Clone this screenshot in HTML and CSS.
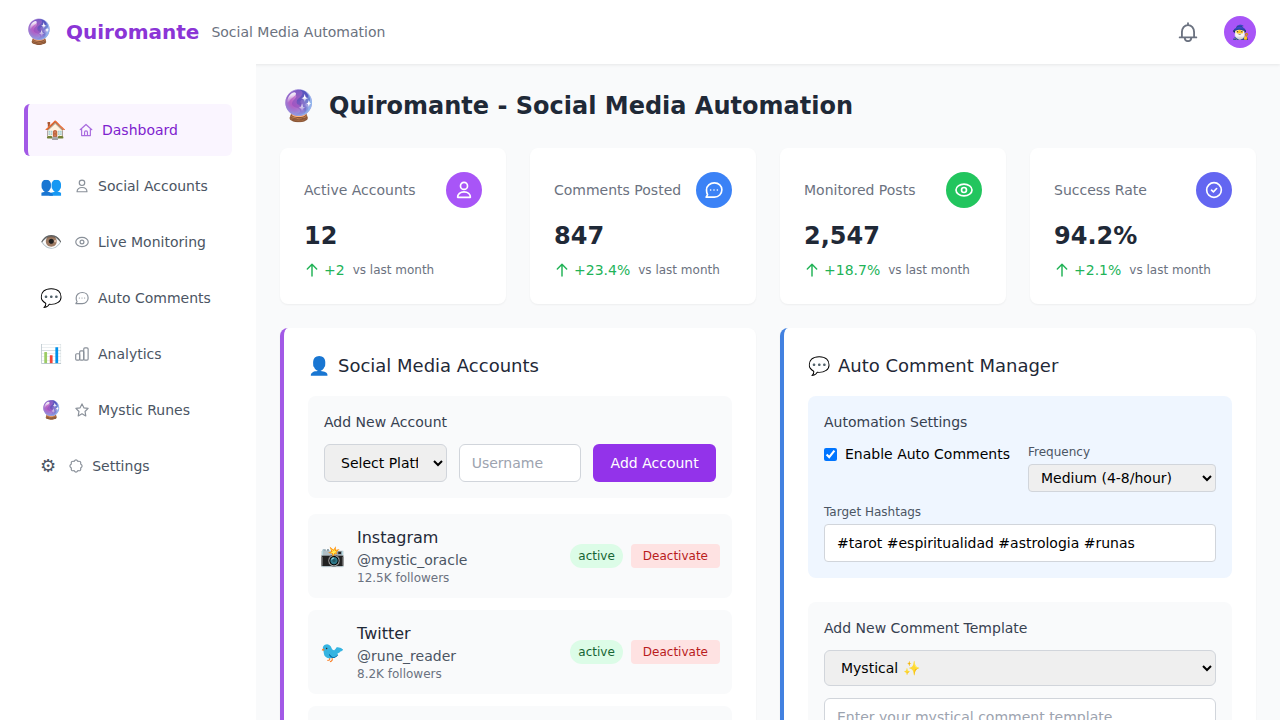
FILE: index.html
```html
<!DOCTYPE html>
<html lang="en">
<head>
<meta charset="utf-8">
<meta name="viewport" content="width=device-width, initial-scale=1">
<title>Quiromante - Social Media Automation</title>
<link rel="stylesheet" href="styles.css">
</head>
<body>
<svg class="sprite" aria-hidden="true">
  <symbol id="i-home" viewBox="0 0 24 24"><path d="M2 11.500 12 2.500l10 9M4.500 9.500V21.500h15V9.500M9.500 21.500v-5.500a2.500 2.500 0 0 1 5 0v5.500"/></symbol>
  <symbol id="i-user" viewBox="0 0 24 24"><circle cx="12" cy="6.500" r="4.700"/><path d="M3.500 21.800c0-4.500 3.500-7.300 8.500-7.300s8.500 2.800 8.500 7.300z"/></symbol>
  <symbol id="i-eye" viewBox="0 0 24 24"><ellipse cx="12" cy="12" rx="10.700" ry="7.800"/><circle cx="12" cy="12" r="3.300"/></symbol>
  <symbol id="i-chat" viewBox="0 0 24 24"><path d="M12.500 2.500c5.800 0 10 4 10 9.300s-4.200 9.700-10 9.700H1.500l2-3.300C2.300 16.500 2 14.500 2 12c0-5.500 4.700-9.500 10.500-9.500z"/><path d="M7.500 12h.01M12 12h.01M16.500 12h.01"/></symbol>
  <symbol id="i-chart" viewBox="0 0 24 24"><rect x="1.200" y="11.500" width="6.800" height="11" rx="2"/><rect x="8" y="6.500" width="7" height="16" rx="2"/><rect x="15" y="1.500" width="7.500" height="21" rx="2"/></symbol>
  <symbol id="i-star" viewBox="0 0 24 24"><path d="m12 1.500 3.200 6.800 7.300 1-5.300 5.300 1.300 7.600L12 18.500l-6.500 3.700 1.300-7.600L1.500 9.300l7.300-1z"/></symbol>
  <symbol id="i-gear" viewBox="0 0 24 24"><path d="M20 8.700q5 3.300 0 6.600q1.200 5.900-4.700 4.700q-3.300 5-6.600 0q-5.900 1.200-4.700-4.700q-5-3.300 0-6.600q-1.200-5.900 4.700-4.700q3.300-5 6.600 0q5.900-1.200 4.700 4.700z"/></symbol>
  <symbol id="i-check" viewBox="0 0 24 24"><circle cx="12" cy="12" r="9.800"/><path d="m8.700 12.300 2.500 2.200 4.300-4.500"/></symbol>
  <symbol id="i-up" viewBox="0 0 24 24"><path d="M12 21V4M5 10.500l7-7 7 7"/></symbol>
  <symbol id="i-bell" viewBox="0 0 24 24"><path d="M2 18.500h20M4.700 18.500v-6.500c0-4.500 3-8.300 7.300-8.300s7.300 3.800 7.300 8.300v6.500M12 3.700V1.500M8 19c.3 2.600 1.800 4 4 4s3.700-1.400 4-4"/></symbol>
</svg>
<div class="app">
  <header class="topbar">
    <div class="brand">
      <span class="brand-emoji">🔮</span>
      <span class="brand-name">Quiromante</span>
      <span class="brand-sub">Social Media Automation</span>
    </div>
    <div class="top-actions">
      <button class="bell" type="button" aria-label="Notifications"><svg class="icon"><use href="#i-bell"/></svg></button>
      <button class="avatar" type="button" aria-label="Profile">🧙‍♂️</button>
    </div>
  </header>
  <div class="body">
    <nav class="sidebar">
      <a class="nav-item active" href="#dashboard"><span class="nav-emoji">🏠</span><svg class="icon"><use href="#i-home"/></svg>Dashboard</a>
      <a class="nav-item" href="#accounts"><span class="nav-emoji">👥</span><svg class="icon"><use href="#i-user"/></svg>Social Accounts</a>
      <a class="nav-item" href="#monitoring"><span class="nav-emoji">👁️</span><svg class="icon"><use href="#i-eye"/></svg>Live Monitoring</a>
      <a class="nav-item" href="#comments"><span class="nav-emoji">💬</span><svg class="icon"><use href="#i-chat"/></svg>Auto Comments</a>
      <a class="nav-item" href="#analytics"><span class="nav-emoji">📊</span><svg class="icon"><use href="#i-chart"/></svg>Analytics</a>
      <a class="nav-item" href="#runes"><span class="nav-emoji">🔮</span><svg class="icon"><use href="#i-star"/></svg>Mystic Runes</a>
      <a class="nav-item" href="#settings"><span class="nav-emoji">⚙</span><svg class="icon"><use href="#i-gear"/></svg>Settings</a>
    </nav>
    <main class="main">
      <h1 class="page-title"><span class="title-emoji">🔮</span>Quiromante - Social Media Automation</h1>
      <section class="stats">
        <article class="card">
          <div class="card-head"><span>Active Accounts</span><span class="bubble purple"><svg class="icon"><use href="#i-user"/></svg></span></div>
          <div class="value">12</div>
          <div class="trend"><svg class="icon"><use href="#i-up"/></svg><span>+2</span><small>vs last month</small></div>
        </article>
        <article class="card">
          <div class="card-head"><span>Comments Posted</span><span class="bubble blue"><svg class="icon"><use href="#i-chat"/></svg></span></div>
          <div class="value">847</div>
          <div class="trend"><svg class="icon"><use href="#i-up"/></svg><span>+23.4%</span><small>vs last month</small></div>
        </article>
        <article class="card">
          <div class="card-head"><span>Monitored Posts</span><span class="bubble green"><svg class="icon"><use href="#i-eye"/></svg></span></div>
          <div class="value">2,547</div>
          <div class="trend"><svg class="icon"><use href="#i-up"/></svg><span>+18.7%</span><small>vs last month</small></div>
        </article>
        <article class="card">
          <div class="card-head"><span>Success Rate</span><span class="bubble indigo"><svg class="icon"><use href="#i-check"/></svg></span></div>
          <div class="value">94.2%</div>
          <div class="trend"><svg class="icon"><use href="#i-up"/></svg><span>+2.1%</span><small>vs last month</small></div>
        </article>
      </section>
      <div class="panels">
        <section class="panel panel-accounts">
          <h2 class="panel-title"><span>👤</span>Social Media Accounts</h2>
          <form class="box">
            <h3 class="box-title">Add New Account</h3>
            <div class="three">
              <select class="field" aria-label="Platform"><option>Select Platform</option></select>
              <input class="field" type="text" placeholder="Username" aria-label="Username">
              <button class="add" type="button">Add Account</button>
            </div>
          </form>
          <ul class="accounts">
            <li class="account">
              <span class="account-emoji">📸</span>
              <div class="account-info"><div class="name">Instagram</div><div class="handle">@mystic_oracle</div><div class="followers">12.5K followers</div></div>
              <span class="badge">active</span><button class="deactivate" type="button">Deactivate</button>
            </li>
            <li class="account">
              <span class="account-emoji">🐦</span>
              <div class="account-info"><div class="name">Twitter</div><div class="handle">@rune_reader</div><div class="followers">8.2K followers</div></div>
              <span class="badge">active</span><button class="deactivate" type="button">Deactivate</button>
            </li>
            <li class="account"></li>
          </ul>
        </section>
        <section class="panel panel-comments">
          <h2 class="panel-title"><span>💬</span>Auto Comment Manager</h2>
          <form class="box box-blue">
            <h3 class="box-title">Automation Settings</h3>
            <div class="two">
              <label class="check"><input type="checkbox" checked>Enable Auto Comments</label>
              <div>
                <label class="label" for="freq">Frequency</label>
                <select class="field compact" id="freq"><option>Medium (4-8/hour)</option></select>
              </div>
            </div>
            <div class="stack">
              <label class="label" for="tags">Target Hashtags</label>
              <input class="field" id="tags" type="text" value="#tarot #espiritualidad #astrologia #runas">
            </div>
          </form>
          <form class="box">
            <h3 class="box-title">Add New Comment Template</h3>
            <select class="field" aria-label="Template style"><option>Mystical ✨</option></select>
            <textarea class="field stack" rows="3" placeholder="Enter your mystical comment template..." aria-label="Template text"></textarea>
          </form>
        </section>
      </div>
    </main>
  </div>
</div>
</body>
</html>
```
FILE: styles.css
```css
*, *::before, *::after { box-sizing: border-box; }
body, h1, h2, h3, ul { margin: 0; padding: 0; }
body {
  font-family: "DejaVu Sans", sans-serif;
  font-size: 14px;
  line-height: 20px;
  color: #1f2937;
  background: #f9fafb;
}
h1, h2, h3 { font-weight: 400; }
ul { list-style: none; }
button, input, select, textarea { font: inherit; }
button { border: 0; cursor: pointer; }
.sprite { position: absolute; width: 0; height: 0; }
.icon {
  width: 16px;
  height: 16px;
  flex: none;
  fill: none;
  stroke: currentColor;
  stroke-width: 2;
  stroke-linecap: round;
  stroke-linejoin: round;
}
.app { display: flex; flex-direction: column; height: 100vh; overflow: hidden; }

.topbar {
  display: flex;
  align-items: center;
  justify-content: space-between;
  flex: none;
  height: 64px;
  padding: 0 24px;
  background: #fff;
  box-shadow: 0 1px 3px rgba(0, 0, 0, .08);
}
.brand, .top-actions { display: flex; align-items: center; }
.brand { gap: 12px; }
.brand-emoji { font-size: 24px; line-height: 32px; }
.brand-name { font-size: 20px; line-height: 28px; font-weight: 700; color: #8b35d6; }
.brand-sub { color: #6b7280; }
.top-actions { gap: 24px; }
.bell { display: flex; padding: 0; background: none; color: #6b7280; }
.bell .icon { width: 24px; height: 20px; stroke-width: 2.2; }
.avatar {
  width: 32px;
  height: 32px;
  padding: 0;
  border-radius: 50%;
  background: #a855f7;
}

.body { display: flex; flex: 1; min-height: 0; }
.sidebar {
  position: relative;
  display: flex;
  flex-direction: column;
  gap: 4px;
  flex: none;
  width: 256px;
  padding: 40px 24px 24px;
  background: #fff;
}
.nav-item {
  display: flex;
  align-items: center;
  height: 52px;
  padding: 0 16px;
  border-radius: 6px;
  color: #4b5563;
  text-decoration: none;
}
.nav-item.active { border-left: 4px solid #a259e6; background: #faf5ff; color: #7e22ce; }
.nav-emoji { margin-right: 12px; font-size: 18px; line-height: 28px; }
.nav-item .icon { padding: 1px; margin-right: 8px; opacity: .65; }

.main { flex: 1; min-width: 0; padding: 24px; overflow-y: auto; scrollbar-width: none; }
.page-title {
  display: flex;
  align-items: center;
  gap: 12px;
  margin-bottom: 24px;
  font-size: 24px;
  line-height: 36px;
  font-weight: 700;
}
.title-emoji { font-size: 30px; font-weight: 400; }
.stats { display: grid; grid-template-columns: repeat(4, 1fr); gap: 24px; margin-bottom: 24px; }
.card { padding: 24px; border-radius: 8px; background: #fff; box-shadow: 0 1px 2px rgba(0, 0, 0, .05); }
.card-head { display: flex; align-items: center; justify-content: space-between; color: #6b7280; }
.bubble {
  display: grid;
  place-items: center;
  width: 36px;
  height: 36px;
  border-radius: 50%;
  color: #fff;
}
.bubble .icon { width: 18px; height: 18px; stroke-width: 2.2; }
.purple { background: #a855f7; }
.blue { background: #3b82f6; }
.green { background: #22c55e; }
.indigo { background: #6366f1; }
.value { margin: 12px 0 8px; font-size: 24px; line-height: 32px; font-weight: 700; }
.trend { display: flex; align-items: center; color: #22b357; }
.trend .icon { margin-right: 4px; stroke-width: 2.2; }
.trend small { margin-left: 8px; font-size: 12px; line-height: 16px; color: #6b7280; }

.panels { display: grid; grid-template-columns: repeat(2, minmax(0, 1fr)); gap: 24px; }
.panel {
  padding: 24px;
  border-left: 4px solid;
  border-radius: 8px;
  background: #fff;
  box-shadow: 0 1px 2px rgba(0, 0, 0, .05);
}
.panel-accounts { border-color: #a259e6; }
.panel-comments { border-color: #4281e0; }
.panel-title { display: flex; gap: 8px; margin-bottom: 16px; font-size: 18px; line-height: 28px; }
.box { padding: 16px; border-radius: 8px; background: #f9fafb; }
.box-blue { margin-bottom: 24px; background: #eff6ff; }
.box-title { margin-bottom: 12px; font-size: 14px; line-height: 20px; color: #374151; }
.three { display: grid; grid-template-columns: repeat(3, minmax(0, 1fr)); gap: 12px; }
.two { display: grid; grid-template-columns: repeat(2, minmax(0, 1fr)); gap: 16px; }
.stack { margin-top: 12px; }
.field {
  display: block;
  width: 100%;
  padding: 8px 12px;
  border: 1px solid #d1d5db;
  border-radius: 6px;
  line-height: 20px;
  background: #fff;
  color: #000;
}
.field::placeholder { color: #9ca3af; }
select.field { background: #efefef; }
textarea.field { resize: vertical; }
.stack .field { border-radius: 4px; }
.field.compact { padding: 4px 8px; border-radius: 4px; }
.add { border-radius: 6px; background: #9333ea; color: #fff; }
.check { display: flex; align-items: center; gap: 8px; height: 20px; color: #000; white-space: nowrap; }
.check input { width: 13px; height: 13px; margin: 0; }
.label { display: block; margin-bottom: 4px; font-size: 12px; line-height: 16px; color: #4b5563; }

.accounts { display: grid; gap: 12px; margin-top: 16px; }
.account {
  display: flex;
  align-items: center;
  gap: 8px;
  min-height: 84px;
  padding: 12px;
  border-radius: 8px;
  background: #f9fafb;
}
.account-emoji { margin-right: 4px; font-size: 20px; line-height: 28px; }
.account-info { flex: 1; }
.name { font-size: 16px; line-height: 24px; }
.handle { color: #4b5563; }
.followers { font-size: 12px; line-height: 16px; color: #6b7280; }
.badge, .deactivate { padding: 4px 8px; font-size: 12px; line-height: 16px; }
.badge { border-radius: 12px; background: #dcfce7; color: #166534; }
.deactivate { padding: 4px 12px; border-radius: 4px; background: #fee2e2; color: #b91c1c; }
```
